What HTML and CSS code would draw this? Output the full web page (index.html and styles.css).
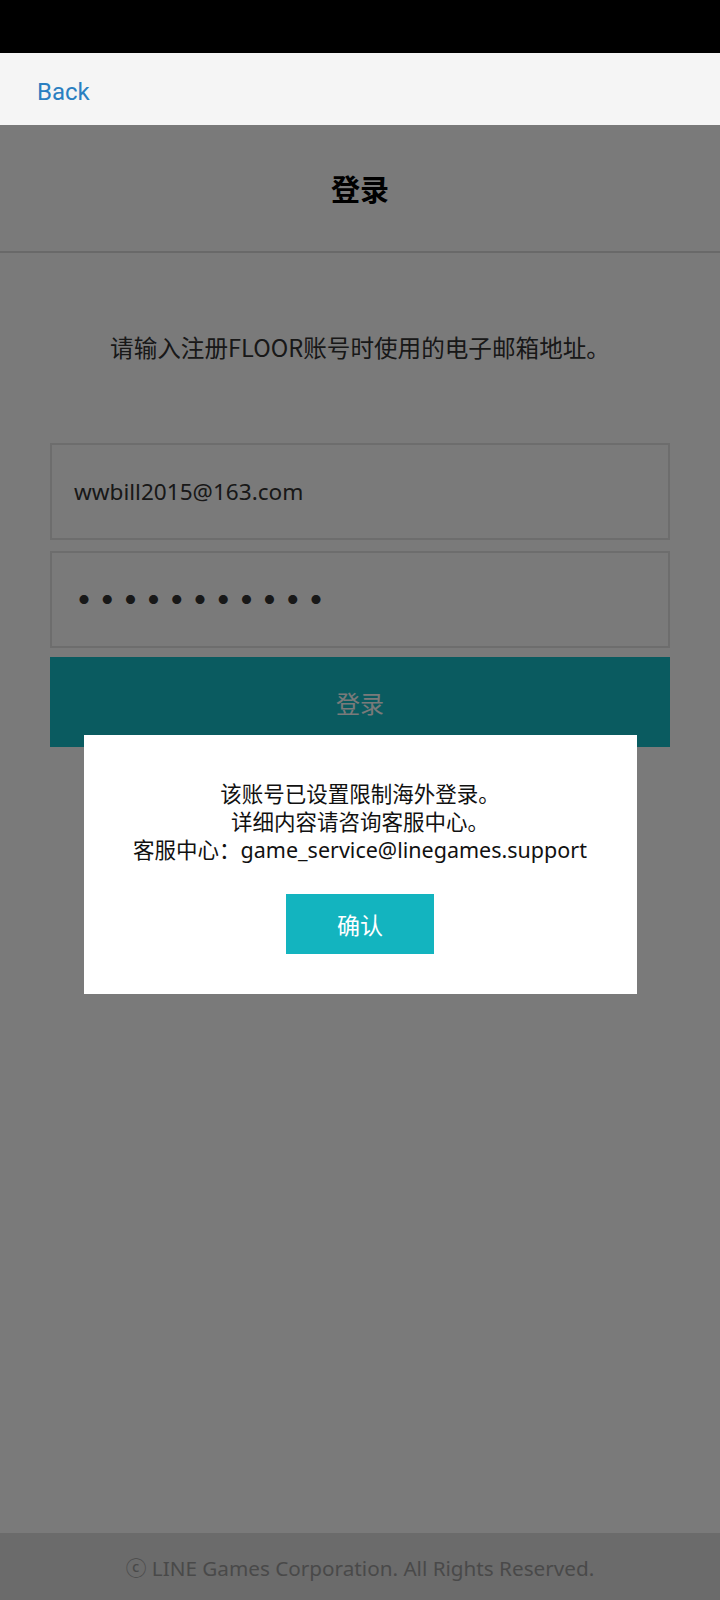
FILE: index.html
```html
<!DOCTYPE html>
<html lang="zh-CN">
  <head>
    <meta charset="UTF-8" />
    <meta name="viewport" content="width=device-width, initial-scale=1.0" />
    <title>登录</title>
    <link rel="stylesheet" href="styles.css">
  </head>
  <body>
    <div class="status-bar"></div>

    <div class="top-bar">
      <a class="back" href="#">Back</a>
    </div>

    <div class="page">
      <div class="title">登录</div>

      <p class="desc">请输入注册FLOOR账号时使用的电子邮箱地址。</p>

      <form class="login-form">
        <div class="field">wwbill2015@163.com</div>
        <div class="field password">●●●●●●●●●●●</div>
        <button type="button" class="login-btn">登录</button>
      </form>

      <div class="spacer"></div>

      <footer>ⓒ LINE Games Corporation. All Rights Reserved.</footer>
    </div>

    <!-- alert popup -->
    <div class="overlay">
      <div class="dialog">
        <p>该账号已设置限制海外登录。<br />详细内容请咨询客服中心。<br />客服中心：game_service@linegames.support</p>
        <button type="button" class="ok-btn">确认</button>
      </div>
    </div>
  </body>
</html>
```

FILE: styles.css
```css
body {
  margin: 0;
  height: 1600px;
  display: flex;
  flex-direction: column;
  font-family: "Noto Sans", "Noto Sans CJK SC", sans-serif;
  background: #fff;
  color: #222;
}

.status-bar {
  height: 53px;
  background: #000;
}

.top-bar {
  height: 72px;
  box-sizing: border-box;
  background: #f5f5f5;
  display: flex;
  align-items: center;
  padding: 6px 0 0 37px;
}

.back {
  font-family: Roboto, sans-serif;
  font-size: 24px;
  color: #2a7fc1;
  text-decoration: none;
}

.page {
  flex: 1;
  display: flex;
  flex-direction: column;
}

.title {
  height: 126px;
  border-bottom: 2px solid #dcdcdc;
  display: flex;
  align-items: center;
  justify-content: center;
  font-family: "Noto Sans CJK SC", sans-serif;
  font-size: 29px;
  font-weight: bold;
  color: #000;
}

.desc {
  margin: 78px 0 0;
  text-align: center;
  font-family: "Noto Sans CJK SC", sans-serif;
  font-size: 23.6px;
  line-height: 32px;
  color: #333;
}

.login-form {
  margin: 80px 50px 0;
  display: flex;
  flex-direction: column;
}

.field {
  height: 93px;
  border: 2px solid #e4e4e4;
  display: flex;
  align-items: center;
  padding-left: 22px;
  font-size: 22.6px;
  color: #333;
  margin-bottom: 11px;
}

.password {
  padding-left: 27px;
  font-size: 10px;
  letter-spacing: 13.2px;
  color: #333;
  margin-bottom: 9px;
}

.login-btn {
  height: 90px;
  border: none;
  background: #15bec8;
  color: #fff;
  font-family: "Noto Sans CJK SC", sans-serif;
  font-size: 24px;
}

.spacer {
  flex: 1;
}

footer {
  height: 67px;
  background: #dfdfdf;
  display: flex;
  align-items: center;
  justify-content: center;
  font-size: 20.7px;
  color: #9a9a9a;
}

.overlay {
  position: fixed;
  top: 125px;
  left: 0;
  right: 0;
  bottom: 0;
  padding-top: 4px;
  background: rgba(0, 0, 0, 0.52);
  display: flex;
  align-items: center;
  justify-content: center;
}

.dialog {
  width: 553px;
  background: #fff;
  padding: 45px 0 40px;
  text-align: center;
}

.dialog p {
  margin: 0;
  font-size: 21.5px;
  line-height: 28px;
  color: #111;
}

.ok-btn {
  margin-top: 30px;
  width: 148px;
  height: 60px;
  border: none;
  background: #13b4bf;
  color: #fff;
  font-family: "Noto Sans CJK SC", sans-serif;
  font-size: 23px;
}
```
